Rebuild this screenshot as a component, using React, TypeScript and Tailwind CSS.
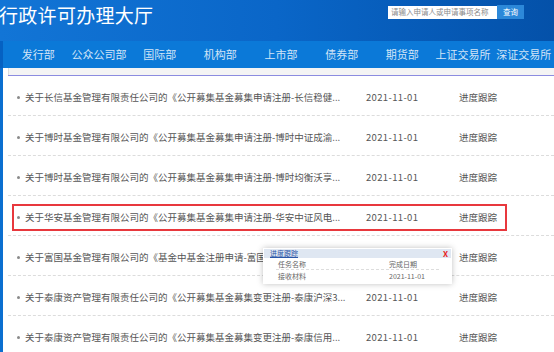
const navItems = ['发行部', '公众公司部', '国际部', '机构部', '上市部', '债券部', '期货部', '上证交易所', '深证交易所'];

const rows = [
  '关于长信基金管理有限责任公司的《公开募集基金募集申请注册-长信稳健...',
  '关于博时基金管理有限公司的《公开募集基金募集申请注册-博时中证成渝...',
  '关于博时基金管理有限公司的《公开募集基金募集申请注册-博时均衡沃享...',
  '关于华安基金管理有限公司的《公开募集基金募集申请注册-华安中证风电...',
  '关于富国基金管理有限公司的《基金中基金注册申请-富国智诚稳健三个...',
  '关于泰康资产管理有限责任公司的《公开募集基金募集变更注册-泰康沪深3...',
  '关于泰康资产管理有限责任公司的《公开募集基金募集变更注册-泰康信用...',
];

export default function App() {
  return (
    <div
      className="relative h-[352px] w-[554px] overflow-hidden bg-white"
      style={{ fontFamily: '"Noto Sans CJK SC", "Noto Sans", sans-serif' }}
    >
      <header className="flex h-[41px] items-start justify-between bg-gradient-to-r from-[#1275d6] via-[#0a66c8] to-[#0451a9]">
        <h1 className="ml-[-1px] mt-[1px] text-[19px] leading-[28px] font-normal tracking-[0.3px] text-white">行政许可办理大厅</h1>
        <div className="mr-[30px] mt-[5px] flex items-center">
          <div className="flex h-[13px] w-[109px] items-center bg-white pl-[3px] text-[7.5px] leading-none text-[#8a8a8a]">
            请输入申请人或申请事项名称
          </div>
          <button type="button" className="h-[14px] w-[27px] bg-[#2c88d9] text-[7.5px] leading-none text-white">
            查询
          </button>
        </div>
      </header>

      <nav className="flex h-[27px] items-center border-l-[3px] border-[#0561c2] bg-[#0b79d8] pl-[5px]">
        {navItems.map((item) => (
          <span key={item} className="w-[61px] text-center text-[11px] text-[#d3e5f7]">
            {item}
          </span>
        ))}
      </nav>

      <div className="flex">
        <div className="w-[3px] shrink-0 bg-[#0b6fd0]" />
        <div className="w-[5px] shrink-0" />
        <main className="flex-1">
          <div className="h-[7px] border-l border-[#dedede] bg-[#f4f4f4]" />
          <div className="border-t border-[#8c8ce0]">
            {rows.map((title, i) => (
              <div key={i} className="h-[40px] border-b border-dashed border-[#dcdcdc] pt-[8px]">
                <div
                  className={`ml-[4px] flex h-[27px] w-[495px] items-center border-2 pl-[2px] text-[9.5px] text-[#555] ${
                    i === 3 ? 'border-[#e8383d]' : 'border-transparent'
                  }`}
                >
                  <span className="ml-[1px] mr-[5px] h-[3px] w-[3px] shrink-0 rounded-full bg-[#8a8a8a]" />
                  <span className="w-[341px] whitespace-nowrap">{title}</span>
                  <span className="w-[93px] tracking-[0.35px]">2021-11-01</span>
                  <span>进度跟踪</span>
                </div>
              </div>
            ))}
          </div>
        </main>
      </div>

      {/* 进度跟踪 弹出层 */}
      <div className="absolute left-[263px] top-[248px] w-[189px] bg-white p-[1px] shadow-[0_0_6px_rgba(0,0,0,0.25)]">
        <div className="flex h-[9px] items-center justify-between bg-[#dfe7f2] pl-[6px] pr-[3px]">
          <span className="text-[7px] leading-none text-[#2a56a8] underline">进度跟踪</span>
          <span className="text-[8px] font-bold leading-none text-[#e82020]">X</span>
        </div>
        <div className="px-[12px] pb-[1px] text-[7px] leading-none text-[#666]">
          <div className="flex h-[12px] items-center border-b border-dashed border-[#ddd] pt-[2px]">
            <span className="w-[113px] pl-[2px]">任务名称</span>
            <span>完成日期</span>
          </div>
          <div className="flex h-[12px] items-center">
            <span className="w-[113px] pl-[2px]">接收材料</span>
            <span>2021-11-01</span>
          </div>
        </div>
      </div>
    </div>
  );
}
